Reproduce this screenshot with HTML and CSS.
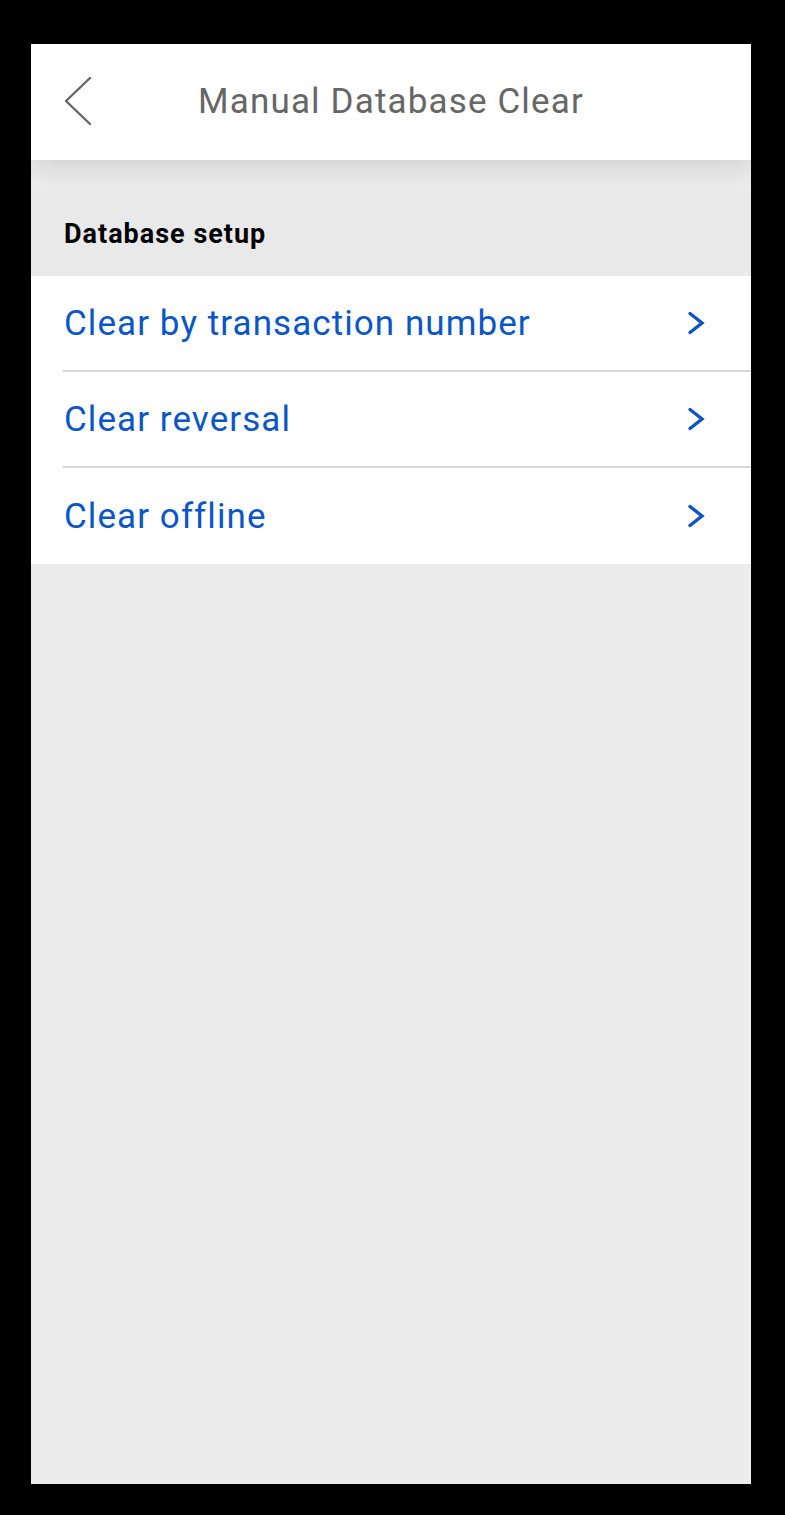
FILE: index.html
```html
<!DOCTYPE html>
<html lang="en">
<head>
<meta charset="utf-8">
<title>Manual Database Clear</title>
<link rel="stylesheet" href="styles.css">
</head>
<body>
<div class="screen">
  <header class="topbar">
    <button class="back" aria-label="Back">
      <svg width="30" height="50" viewBox="0 0 30 50"><polyline points="25,2 1,25 25,48" fill="none" stroke="#666" stroke-width="2.4" stroke-linecap="round" stroke-linejoin="round"/></svg>
    </button>
    <h1 class="title">Manual Database Clear</h1>
  </header>
  <main class="content">
    <div class="section-head">Database setup</div>
    <ul class="list">
      <li class="row"><span class="label">Clear by transaction number</span><svg class="chev" width="20" height="24" viewBox="0 0 20 24"><polyline points="3,2.5 15,12 3,21.5" fill="none" stroke="#0a56c9" stroke-width="3.4" stroke-linecap="round" stroke-linejoin="miter"/></svg></li>
      <li class="row"><span class="label">Clear reversal</span><svg class="chev" width="20" height="24" viewBox="0 0 20 24"><polyline points="3,2.5 15,12 3,21.5" fill="none" stroke="#0a56c9" stroke-width="3.4" stroke-linecap="round" stroke-linejoin="miter"/></svg></li>
      <li class="row last"><span class="label">Clear offline</span><svg class="chev" width="20" height="24" viewBox="0 0 20 24"><polyline points="3,2.5 15,12 3,21.5" fill="none" stroke="#0a56c9" stroke-width="3.4" stroke-linecap="round" stroke-linejoin="miter"/></svg></li>
    </ul>
  </main>
</div>
</body>
</html>
```
FILE: styles.css
```css
html, body {
  margin: 0;
  padding: 0;
  background: #000;
}
body {
  padding: 44px 34px 31px 31px;
  font-family: Roboto, "Noto Sans", "Liberation Sans", sans-serif;
}
.screen {
  width: 720px;
  height: 1440px;
  background: #ececec;
  display: flex;
  flex-direction: column;
  overflow: hidden;
}
.topbar {
  position: relative;
  z-index: 2;
  height: 116px;
  flex: 0 0 116px;
  background: #fff;
  box-shadow: 0 6px 28px rgba(0,0,0,0.13);
  display: flex;
  align-items: center;
  justify-content: center;
}
.back {
  position: absolute;
  left: 34px;
  top: 32px;
  width: 30px;
  height: 50px;
  padding: 0;
  border: 0;
  background: none;
  display: block;
}
.back svg { display: block; }
.title {
  margin: 0;
  font-size: 35px;
  font-weight: 400;
  color: #666;
  line-height: 1;
  margin-top: -1px;
  letter-spacing: 1.15px;
}
.content {
  padding-top: 32px;
  flex: 1;
}
.section-head {
  height: 84px;
  box-sizing: border-box;
  background: #e9e9e9;
  padding-left: 33px;
  display: flex;
  align-items: center;
  font-size: 27px;
  font-weight: 700;
  color: #000;
  letter-spacing: 1px;
}
.list {
  list-style: none;
  margin: 0;
  padding: 0 0 0 32px;
  background: #fff;
}
.row {
  height: 96px;
  box-sizing: border-box;
  border-bottom: 2px solid #d6d6d6;
  display: flex;
  align-items: center;
  justify-content: space-between;
  padding-right: 44px;
  padding-left: 1px;
}
.row.last { border-bottom: 0; }
.label {
  font-size: 35px;
  color: #0a56c9;
  line-height: 1;
  letter-spacing: 1.07px;
}
.chev { display: block; }
```
